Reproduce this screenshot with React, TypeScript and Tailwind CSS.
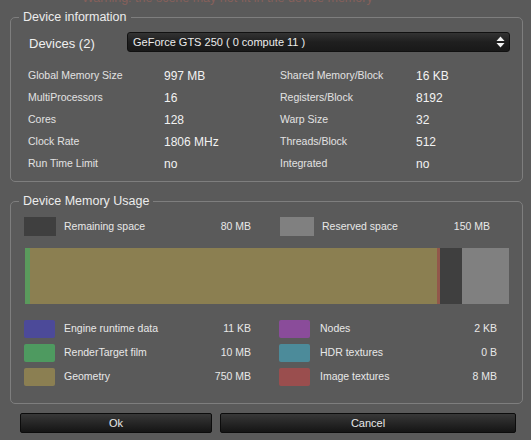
import type { ReactNode } from "react";

const info: [string, string, string, string][] = [
  ["Global Memory Size", "997 MB", "Shared Memory/Block", "16 KB"],
  ["MultiProcessors", "16", "Registers/Block", "8192"],
  ["Cores", "128", "Warp Size", "32"],
  ["Clock Rate", "1806 MHz", "Threads/Block", "512"],
  ["Run Time Limit", "no", "Integrated", "no"],
];

const legend: [string, string, string, string, string, string][] = [
  ["bg-[#4c4a99]", "Engine runtime data", "11 KB", "bg-[#8a4c9a]", "Nodes", "2 KB"],
  ["bg-[#4e9a60]", "RenderTarget film", "10 MB", "bg-[#4c8b9a]", "HDR textures", "0 B"],
  ["bg-[#8b7f52]", "Geometry", "750 MB", "bg-[#9a4e4e]", "Image textures", "8 MB"],
];

function Group({ title, className, children }: { title: string; className?: string; children: ReactNode }) {
  return (
    <fieldset className={`mx-[10px] mr-[8px] rounded-[5px] border border-[#7e7e7e] ${className ?? ""}`}>
      <legend className="ml-[8px] px-[4px] text-[12.5px] leading-4 text-[#ececec]">{title}</legend>
      {children}
    </fieldset>
  );
}

function Button({ label, className }: { label: string; className?: string }) {
  return (
    <button className={`h-[20px] rounded-[2px] border border-[#0c0c0c] bg-gradient-to-b from-[#383838] to-[#151515] text-[11px] text-[#e8e8e8] ${className ?? ""}`}>
      {label}
    </button>
  );
}

export default function App() {
  return (
    <div className="w-[531px] h-[440px] overflow-hidden bg-[#5a5a5a] font-['Liberation_Sans',Arial,sans-serif]">
      <div className="h-[9px] overflow-hidden pl-[82px]">
        <p className="text-[12.5px] leading-[12px] text-[#86605a] -translate-y-[8px] whitespace-nowrap">
          Warning: the scene may not fit in the device memory
        </p>
      </div>

      <Group title="Device information" className="pb-[6px]">
        <div className="mt-[7px] flex items-center h-[20px]">
          <span className="w-[116px] pl-[18px] text-[13px] text-[#f0f0f0] translate-y-[2px]">Devices (2)</span>
          <div className="flex-1 mr-[12px] h-[20px] flex items-center justify-between rounded-[3px] border border-[#111] bg-gradient-to-b from-[#333] via-[#1f1f1f] to-[#191919] pl-[5px] pr-[4px]">
            <span className="text-[11px] text-[#ececec]">GeForce GTS 250 ( 0 compute 11 )</span>
            <svg width="9" height="12" viewBox="0 0 9 12">
              <path d="M4.5 0.5 L8.5 5 L0.5 5 Z" fill="#f4f4f4" />
              <path d="M0.5 7 L8.5 7 L4.5 11.5 Z" fill="#f4f4f4" />
            </svg>
          </div>
        </div>
        <div className="mt-[13px] pl-[17px] grid grid-cols-[136px_116px_136px_1fr]">
          {info.map(([a, av, b, bv]) => (
            <div key={a} className="contents">
              <span className="h-[22px] flex items-center text-[10.5px] text-[#e2e2e2]">{a}</span>
              <span className="h-[22px] flex items-center text-[12px] text-[#f2f2f2]">{av}</span>
              <span className="h-[22px] flex items-center text-[10.5px] text-[#e2e2e2]">{b}</span>
              <span className="h-[22px] flex items-center text-[12px] text-[#f2f2f2]">{bv}</span>
            </div>
          ))}
        </div>
      </Group>

      <Group title="Device Memory Usage" className="mt-[11px] pb-[14px]">
        <div className="mt-[8px] flex items-center h-[19px] text-[10.5px] text-[#e8e8e8]">
          <span className="ml-[13px] w-[32px] h-[19px] bg-[#3f3f3f]" />
          <span className="ml-[8px] w-[127px]">Remaining space</span>
          <span className="w-[60px] text-right">80 MB</span>
          <span className="ml-[29px] w-[34px] h-[19px] bg-[#808080]" />
          <span className="ml-[8px] w-[108px]">Reserved space</span>
          <span className="w-[60px] text-right">150 MB</span>
        </div>

        <div className="mt-[12px] ml-[14px] mr-[13px] h-[56px] flex">
          <div className="w-[5px] bg-[#5a9a5c]" />
          <div className="flex-1 bg-[#8b7f51]" />
          <div className="w-[3px] bg-[#92574a]" />
          <div className="w-[22px] bg-[#3f3f3f]" />
          <div className="w-[47px] bg-[#808080]" />
        </div>

        <div className="mt-[13px] grid grid-cols-[268px_1fr] text-[10.5px] text-[#e8e8e8]">
          {legend.map(([c1, l1, v1, c2, l2, v2]) => (
            <div key={l1} className="contents">
              <div className="h-[24px] flex items-center pl-[13px]">
                <span className={`w-[31px] h-[18px] rounded-[2px] ${c1}`} />
                <span className="ml-[9px] flex-1">{l1}</span>
                <span className="mr-[28px]">{v1}</span>
              </div>
              <div className="h-[24px] flex items-center">
                <span className={`w-[31px] h-[18px] rounded-[2px] ${c2}`} />
                <span className="ml-[10px] flex-1">{l2}</span>
                <span className="mr-[25px]">{v2}</span>
              </div>
            </div>
          ))}
        </div>
      </Group>

      <div className="mt-[9px] flex pl-[20px] gap-[8px]">
        <Button label="Ok" className="w-[192px]" />
        <Button label="Cancel" className="w-[296px]" />
      </div>
    </div>
  );
}
